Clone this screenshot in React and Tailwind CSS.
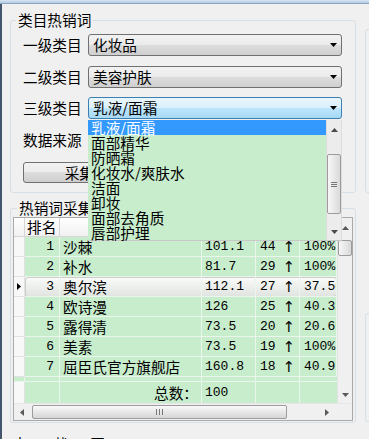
import React from 'react';

const ROWS = [
  { rank: 1, name: '沙棘', val: '101.1', cnt: '44', pct: '100%' },
  { rank: 2, name: '补水', val: '81.7', cnt: '29', pct: '100%' },
  { rank: 3, name: '奥尔滨', val: '112.1', cnt: '27', pct: '37.50%' },
  { rank: 4, name: '欧诗漫', val: '126', cnt: '25', pct: '40.32%' },
  { rank: 5, name: '露得清', val: '73.5', cnt: '20', pct: '20.69%' },
  { rank: 6, name: '美素', val: '73.5', cnt: '19', pct: '100%' },
  { rank: 7, name: '屈臣氏官方旗舰店', val: '160.8', cnt: '18', pct: '40.91%' },
];

const ITEMS = ['乳液/面霜', '面部精华', '防晒霜', '化妆水/爽肤水', '洁面', '卸妆', '面部去角质', '唇部护理'];

const MONO = "font-['Liberation_Mono',monospace] text-[13px]";

function Down({ fill = '#000' }) {
  return (
    <svg width="7" height="4" viewBox="0 0 7 4">
      <path d="M0 0h7L3.5 4z" fill={fill} />
    </svg>
  );
}

function Up({ fill = '#000' }) {
  return (
    <svg width="7" height="4" viewBox="0 0 7 4">
      <path d="M0 4h7L3.5 0z" fill={fill} />
    </svg>
  );
}

function Combo({ text, focused, children }) {
  return (
    <div className="relative">
      <div
        className={
          focused
            ? 'flex h-[22px] w-[254px] items-center rounded-[3px] border border-[#3c7fb1] bg-[linear-gradient(#eaf6fd_0%,#d9f0fc_50%,#bee6fd_50%,#a7d9f5_100%)] pl-[4px] pr-[4px]'
            : 'flex h-[22px] w-[254px] items-center rounded-[3px] border border-[#707070] bg-[linear-gradient(#f2f2f2_0%,#ebebeb_50%,#dddddd_50%,#cfcfcf_100%)] pl-[4px] pr-[4px]'
        }
      >
        <span className="flex-1 whitespace-nowrap">{text}</span>
        <Down />
      </div>
      {children}
    </div>
  );
}

function DropList() {
  return (
    <div className="absolute left-0 top-[23px] z-10 flex h-[121px] w-[254px] border-b border-[#c8c8c8] bg-[#c7edcc]">
      <div className="flex-1">
        {ITEMS.map((t, i) => (
          <div
            key={t}
            className={
              i === 0
                ? 'h-[15px] whitespace-nowrap bg-[#3399ff] pl-[3px] leading-[15px] text-white'
                : 'h-[15px] whitespace-nowrap pl-[3px] leading-[15px]'
            }
          >
            {t}
          </div>
        ))}
      </div>
      <div className="flex w-[16px] flex-col items-center border-l border-r border-[#dcdcdc] bg-[#ececec]">
        <div className="flex h-[20px] items-center">
          <Up fill="#4a4a4a" />
        </div>
        <div className="mt-[14px] flex h-[60px] w-[14px] flex-col items-center justify-center gap-[1px] rounded-[2px] border border-[#9c9c9c] bg-[linear-gradient(90deg,#f7f7f7,#dadada)]">
          <div className="h-[1px] w-[6px] bg-[#777]" />
          <div className="h-[1px] w-[6px] bg-[#777]" />
          <div className="h-[1px] w-[6px] bg-[#777]" />
        </div>
        <div className="flex-1" />
        <div className="flex h-[16px] items-center">
          <Down fill="#4a4a4a" />
        </div>
      </div>
    </div>
  );
}

function Row({ r, selected }) {
  const cell = 'flex h-full items-center border-r border-b border-[#eaf6ec]';
  return (
    <div className="flex h-[20px]">
      <div className="flex h-full w-[11px] items-center justify-center border-r border-b border-[#e2e2e2] bg-[#f8f8f8]">
        {selected && (
          <svg width="4" height="7" viewBox="0 0 4 7">
            <path d="M0 0v7l4-3.5z" fill="#000" />
          </svg>
        )}
      </div>
      <div
        className={
          selected
            ? 'flex flex-1 rounded-[3px] bg-[linear-gradient(#fafbfa,#dfe3df)] shadow-[inset_0_0_0_1px_#c9cec9]'
            : 'flex flex-1 bg-[#c7edcc]'
        }
      >
        <div className={`${cell} w-[35px] justify-end pr-[5px] ${MONO}`}>{r.rank}</div>
        <div className={`${cell} w-[142px] whitespace-nowrap pl-[3px]`}>{r.name}</div>
        <div className={`${cell} w-[54px] pl-[3px] ${MONO}`}>{r.val}</div>
        <div className={`${cell} w-[44px] justify-between pl-[4px] pr-[4px] ${MONO}`}>
          <span>{r.cnt}</span>
          <span className="font-['DejaVu_Sans',sans-serif] text-[15px] leading-[16px]">↑</span>
        </div>
        <div className={`${cell} w-[37px] overflow-hidden whitespace-nowrap pl-[4px] ${MONO}`}>{r.pct}</div>
      </div>
    </div>
  );
}

function Grid() {
  const head = 'flex h-full items-center border-r border-b border-[#d5d5d5] bg-[linear-gradient(#ffffff,#f1f1f1)]';
  const band = 'h-full border-r border-[#eaf6ec]';
  return (
    <div className="h-[204px] w-[340px] border border-[#a9a9a9] bg-white">
      <div className="flex h-[185px]">
        <div className="w-[323px]">
          <div className="flex h-[19px]">
            <div className={`${head} w-[11px]`} />
            <div className={`${head} w-[35px] pl-[2px]`}>排名</div>
            <div className={`${head} w-[142px] justify-center`}>关键词</div>
            <div className={`${head} w-[54px] justify-center`}>指数</div>
            <div className={`${head} w-[44px] justify-center`}>变化</div>
            <div className={`${head} w-[37px] justify-center`}>占比</div>
          </div>
          {ROWS.map((r) => (
            <Row key={r.rank} r={r} selected={r.rank === 3} />
          ))}
          <div className="flex h-[5px] border-b border-[#eaf6ec] bg-[#c7edcc]">
            <div className={`${band} w-[11px]`} />
            <div className={`${band} w-[35px]`} />
            <div className={`${band} w-[142px]`} />
            <div className={`${band} w-[54px]`} />
            <div className={`${band} w-[44px]`} />
          </div>
          <div className="flex h-[21px]">
            <div className="h-full w-[11px] border-r border-[#e2e2e2] bg-[#f8f8f8]" />
            <div className="flex flex-1 bg-[#c7edcc]">
              <div className="h-full w-[35px] border-r border-[#eaf6ec]" />
              <div className="flex h-full w-[142px] items-center justify-end border-r border-[#eaf6ec] pr-[3px]">总数：</div>
              <div className={`flex h-full w-[54px] items-center border-r border-[#eaf6ec] pl-[3px] ${MONO}`}>100</div>
              <div className="h-full w-[44px] border-r border-[#eaf6ec]" />
              <div className="h-full w-[37px]" />
            </div>
          </div>
        </div>
        <div className="flex w-[15px] flex-col items-center border-l border-[#e3e3e3] bg-[#f0f0f0]">
          <div className="flex h-[20px] items-center">
            <Up fill="#5a5a5a" />
          </div>
          <div className="mt-[2px] h-[16px] w-[14px] rounded-[2px] border border-[#9c9c9c] bg-[linear-gradient(90deg,#f7f7f7,#d8d8d8)]" />
          <div className="flex-1" />
          <div className="flex h-[17px] items-center">
            <Down fill="#5a5a5a" />
          </div>
        </div>
      </div>
      <div className="flex h-[17px] border-t border-[#e6e6e6] bg-[#f0f0f0]">
        <div className="flex w-[323px] items-center">
          <div className="flex w-[16px] justify-center">
            <svg width="4" height="7" viewBox="0 0 4 7">
              <path d="M4 0v7L0 3.5z" fill="#5a5a5a" />
            </svg>
          </div>
          <div className="ml-[2px] flex h-[14px] w-[255px] items-center justify-center gap-[2px] rounded-[2px] border border-[#9c9c9c] bg-[linear-gradient(#f9f9f9,#d6d6d6)]">
            <div className="h-[6px] w-[1px] bg-[#777]" />
            <div className="h-[6px] w-[1px] bg-[#777]" />
            <div className="h-[6px] w-[1px] bg-[#777]" />
          </div>
          <div className="flex-1" />
          <div className="flex w-[20px] justify-center">
            <svg width="4" height="7" viewBox="0 0 4 7">
              <path d="M0 0v7l4-3.5z" fill="#5a5a5a" />
            </svg>
          </div>
        </div>
        <div className="w-[15px] bg-[#f0f0f0]" />
      </div>
    </div>
  );
}

export default function App() {
  return (
    <div className="h-[439px] w-[369px] overflow-hidden bg-[#f0f0f0] font-['Noto_Sans_CJK_SC',sans-serif] text-[14.67px] leading-[16px] text-black">
      <div className="h-[4px] border-b border-[#8ea4bc] bg-[linear-gradient(#d6e5f4,#b4cbe3)]" />
      <div className="flex h-[435px] border-l-2 border-[#44566b]">
        <div className="w-[354px] shrink-0 pl-[8px]">
          {/* 类目热销词 */}
          <div className="relative mt-[16px] h-[173px] w-[346px] rounded-[3px] border border-[#d5dfe5] pl-[12px] pt-[13px]">
            <span className="absolute -top-[9px] left-[5px] bg-[#f0f0f0] px-[2px]">类目热销词</span>
            <div className="flex items-center">
              <span className="w-[65px]">一级类目</span>
              <Combo text="化妆品" />
            </div>
            <div className="mt-[10px] flex items-center">
              <span className="w-[65px]">二级类目</span>
              <Combo text="美容护肤" />
            </div>
            <div className="mt-[9px] flex items-center">
              <span className="w-[65px]">三级类目</span>
              <Combo text="乳液/面霜" focused>
                <DropList />
              </Combo>
            </div>
            <div className="mt-[10px] flex items-center">
              <span className="w-[65px]">数据来源</span>
              <Combo text="淘宝指数" />
            </div>
            <button className="mt-[11px] flex h-[21px] w-[142px] items-center justify-center rounded-[3px] border border-[#707070] bg-[linear-gradient(#f2f2f2_0%,#ebebeb_50%,#dddddd_50%,#cfcfcf_100%)]">
              采集数据
            </button>
          </div>

          {/* 热销词采集结果 */}
          <div className="relative mt-[15px] h-[215px] w-[346px] rounded-[3px] border border-[#d5dfe5] pb-[1px] pl-[2px] pr-[2px] pt-[8px]">
            <span className="absolute -top-[9px] left-[6px] bg-[#f0f0f0] px-[2px]">热销词采集结果</span>
            <Grid />
          </div>

          <div className="mt-[13px] flex whitespace-nowrap pl-[3px]">
            <span>卡</span>
            <span className="ml-[26px]">状</span>
            <span className="ml-[22px]">图</span>
          </div>
        </div>
        <div className="flex-1 pl-[9px]">
          <div className="mt-[25px] h-[164px] w-[30px] rounded-[3px] border border-[#d5dfe5]" />
          <div className="mt-[120px] h-[109px] w-[30px] rounded-[3px] border border-[#d5dfe5]" />
        </div>
      </div>
    </div>
  );
}
